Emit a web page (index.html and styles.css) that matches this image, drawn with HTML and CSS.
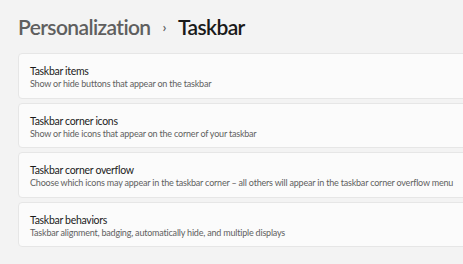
FILE: index.html
```html
<!DOCTYPE html>
<html lang="en">
<head>
  <meta charset="UTF-8" />
  <title>Taskbar</title>
  <link rel="stylesheet" href="styles.css">
</head>
<body>
  <div class="page">
    <h1 class="crumbs">
      <span class="crumb-parent">Personalization</span>
      <span class="crumb-sep">›</span>
      <span class="crumb-current">Taskbar</span>
    </h1>

    <div class="cards">
      <div class="card">
        <div class="card-title">Taskbar items</div>
        <div class="card-desc">Show or hide buttons that appear on the taskbar</div>
      </div>
      <div class="card">
        <div class="card-title">Taskbar corner icons</div>
        <div class="card-desc">Show or hide icons that appear on the corner of your taskbar</div>
      </div>
      <div class="card">
        <div class="card-title">Taskbar corner overflow</div>
        <div class="card-desc">Choose which icons may appear in the taskbar corner – all others will appear in the taskbar corner overflow menu</div>
      </div>
      <div class="card">
        <div class="card-title">Taskbar behaviors</div>
        <div class="card-desc">Taskbar alignment, badging, automatically hide, and multiple displays</div>
      </div>
    </div>
  </div>
</body>
</html>
```

FILE: styles.css
```css
body {
  margin: 0;
  background: #f3f3f3;
  font-family: "Lato", "Noto Sans", sans-serif;
  overflow: hidden;
}
.page {
  padding: 12px 0 0 18px;
}
.crumbs {
  display: flex;
  align-items: center;
  margin: 0 0 13px 0;
  font-size: 21px;
  font-weight: 600;
  letter-spacing: -0.6px;
  white-space: nowrap;
  height: 28px;
}
.crumb-parent {
  color: #5f5f5f;
}
.crumb-sep {
  color: #5f5f5f;
  font-size: 14px;
  margin: 0 12px 0 12px;
}
.crumb-current {
  color: #1a1a1a;
}
.cards {
  display: flex;
  flex-direction: column;
  gap: 4px;
  width: 470px;
}
.card {
  background: #fbfbfb;
  border: 1px solid #e6e6e6;
  border-radius: 4px;
  height: 45.5px;
  box-sizing: border-box;
  padding: 11px 11px 0 11px;
  white-space: nowrap;
}
.card-title {
  font-size: 10.5px;
  letter-spacing: -0.3px;
  color: #1b1b1b;
  line-height: 13px;
}
.card-desc {
  font-size: 9px;
  letter-spacing: -0.2px;
  color: #616161;
  line-height: 12px;
}
```
